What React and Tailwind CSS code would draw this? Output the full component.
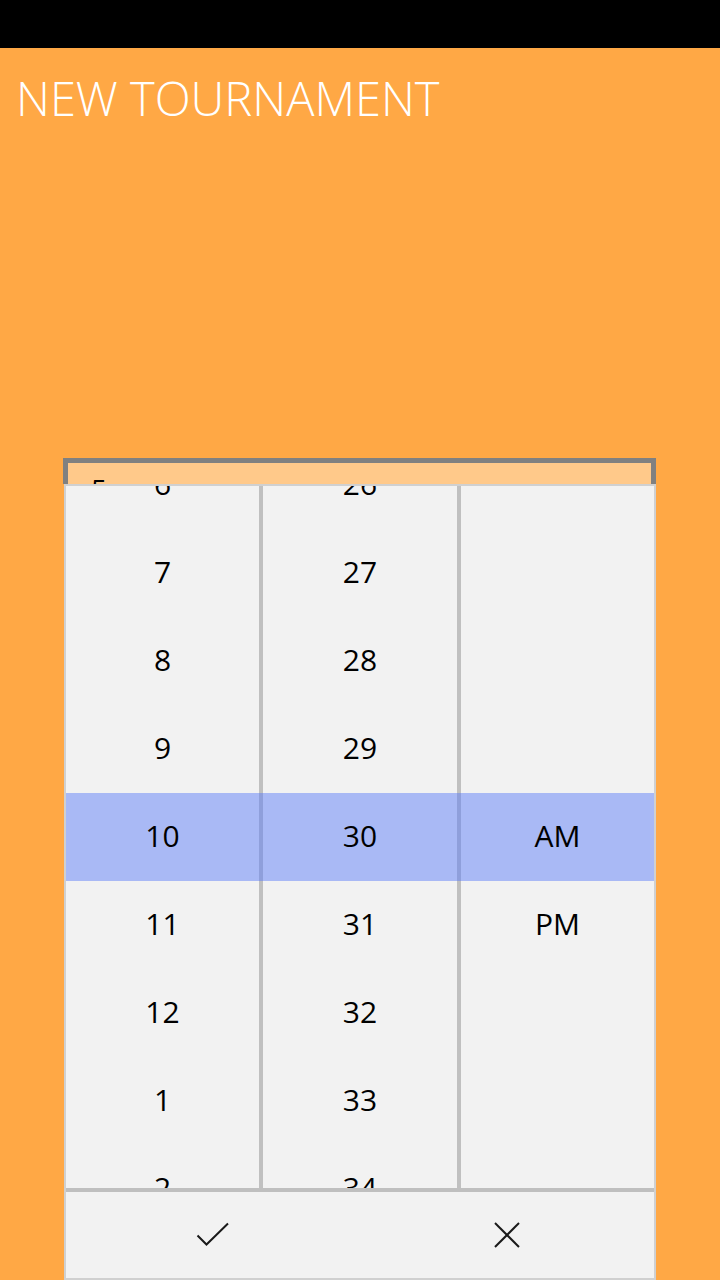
import React from 'react';

const hours = ['6', '7', '8', '9', '10', '11', '12', '1', '2'];
const minutes = ['26', '27', '28', '29', '30', '31', '32', '33', '34'];
const periods = ['', '', '', '', 'AM', 'PM', '', '', ''];

const Column = ({ items, className }) => (
  <div className={`flex flex-col justify-center overflow-hidden ${className}`}>
    {items.map((item, i) => (
      <div key={i} className="relative z-10 h-[88px] shrink-0 flex items-center justify-center pb-[4px] text-[30px] text-black">
        {item}
      </div>
    ))}
  </div>
);

const App = () => {
  return (
    <div className="w-[720px] h-[1280px] bg-[#FFA845] overflow-hidden flex flex-col" style={{ fontFamily: '"Open Sans", "Noto Sans", sans-serif' }}>
      {/* status bar */}
      <div className="h-12 bg-black shrink-0"></div>

      {/* page title */}
      <h1 className="pl-[16px] pt-[22px] text-[47px] font-light leading-[56px] text-white">
        NEW TOURNAMENT
      </h1>

      {/* time picker */}
      <div className="mt-[332px] ml-[63px] w-[593px] flex flex-col">
        <div className="h-[26px] border-[5px] border-b-0 border-[#808080] bg-[#FFC98A] overflow-hidden pl-[23px] pt-[12px] text-[28px] leading-[28px] text-black">
          5
        </div>

        <div className="ml-[1px] w-[592px] border-2 border-[#D0D0D0] bg-[#F2F2F2] flex flex-col">
          <div className="relative h-[702px] flex">
            <Column items={hours} className="w-[197px] border-r-4 border-[#C0C0C0]" />
            <Column items={minutes} className="w-[198px] border-r-4 border-[#C0C0C0]" />
            <Column items={periods} className="flex-1" />
            {/* selection band */}
            <div className="absolute z-0 inset-x-0 top-[307px] h-[88px] bg-[#5A7BF8]/[0.48]"></div>
          </div>

          <div className="h-1 bg-[#BFBFBF]"></div>

          <div className="h-[86px] flex">
            <button className="flex-1 flex items-center justify-center">
              <svg width="34" height="26" viewBox="0 0 34 26" fill="none" stroke="#1a1a1a" strokeWidth="2">
                <polyline points="1.5,13.5 10.5,22.5 32,1.5" />
              </svg>
            </button>
            <button className="flex-1 flex items-center justify-center">
              <svg width="26" height="26" viewBox="0 0 26 26" fill="none" stroke="#1a1a1a" strokeWidth="2">
                <line x1="1" y1="1" x2="25" y2="25" />
                <line x1="25" y1="1" x2="1" y2="25" />
              </svg>
            </button>
          </div>
        </div>
      </div>
    </div>
  );
};

export default App;
